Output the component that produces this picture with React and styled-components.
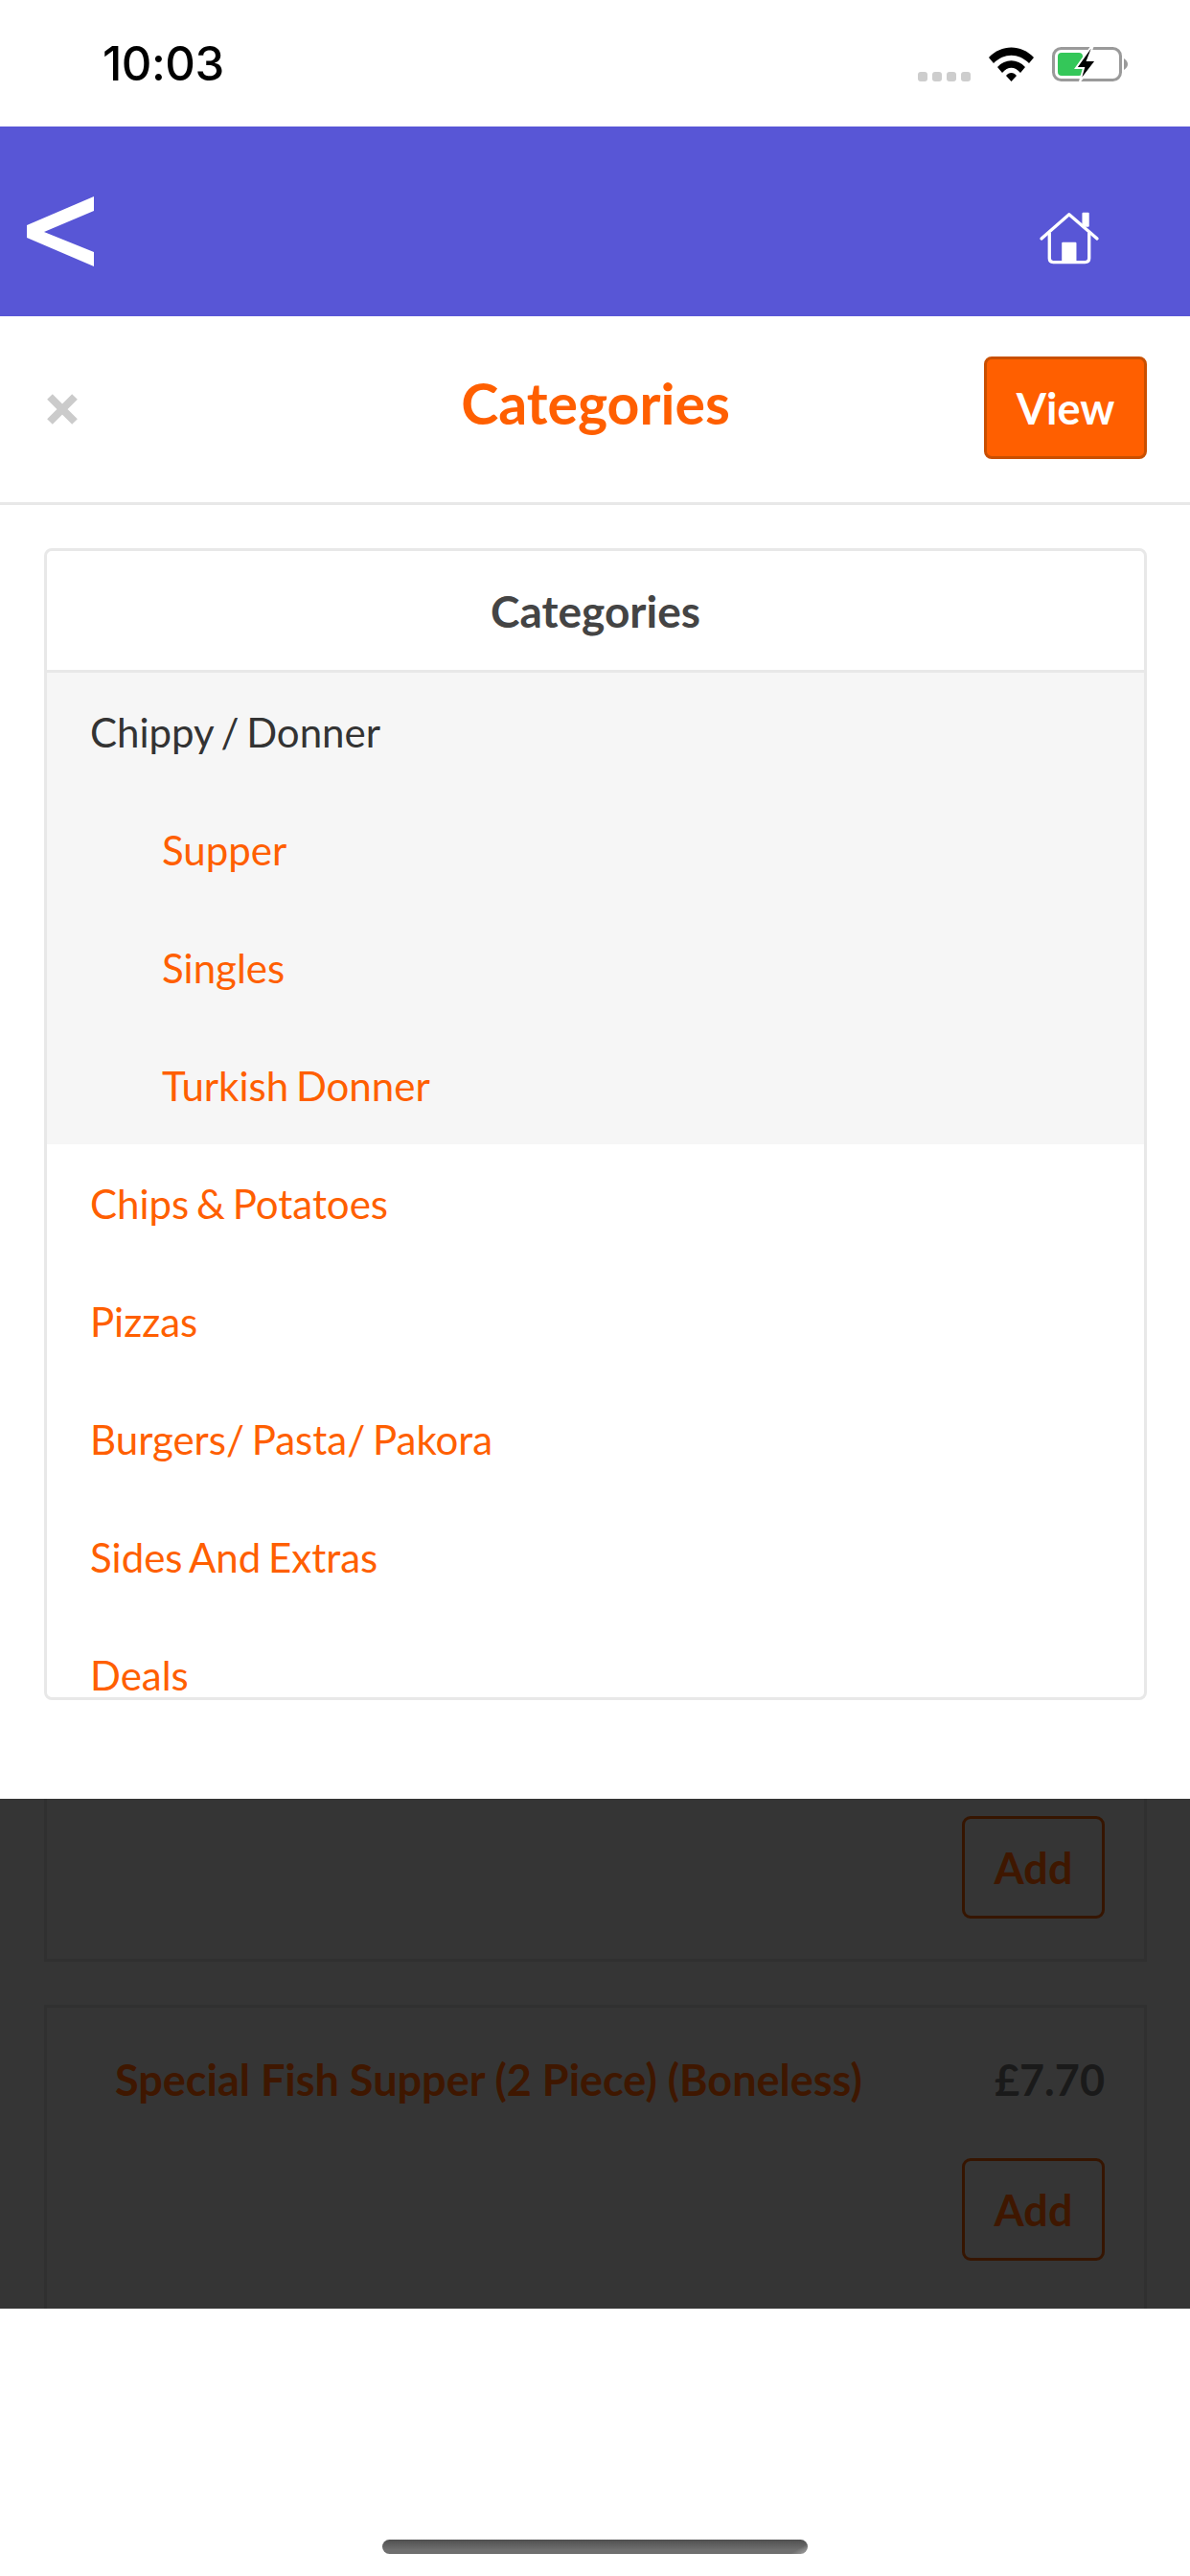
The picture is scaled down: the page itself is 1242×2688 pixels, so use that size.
import React from "react";
import styled, { createGlobalStyle } from "styled-components";

const Global = createGlobalStyle`
  html, body { margin: 0; padding: 0; background: #fff; }
  body { font-family: "Lato", "Open Sans", sans-serif; }
  * { box-sizing: border-box; }
`;

const Screen = styled.div`
  width: 1242px;
  height: 2688px;
  display: flex;
  flex-direction: column;
  overflow: hidden;
  background: #fff;
`;

const StatusBar = styled.div`
  height: 132px;
  padding: 49px 65px 0 107px;
  display: flex;
  justify-content: space-between;
  align-items: flex-start;
`;

const Clock = styled.span`
  font-family: "Inter", "Liberation Sans", sans-serif;
  font-size: 49px;
  font-weight: 500;
  line-height: 36px;
  letter-spacing: -0.5px;
  color: #000;
`;

const StatusIcons = styled.div`
  display: flex;
  align-items: flex-end;
  height: 36px;
`;

const Signal = styled.div`
  display: flex;
  gap: 5px;
  margin-right: 19px;
`;

const SignalDot = styled.i`
  width: 10px;
  height: 10px;
  border-radius: 3px;
  background: #cdcdcd;
`;

const WifiIcon = styled.svg`
  display: block;
  margin-right: 19px;
`;

const NavBar = styled.div`
  height: 198px;
  padding: 73px 92px 0 28px;
  display: flex;
  justify-content: space-between;
  align-items: flex-start;
  background: #5856d6;
`;

const HomeIcon = styled.svg`
  display: block;
  margin-top: 13px;
`;

const Sheet = styled.div`
  height: 1547px;
  background: #fff;
`;

const SheetHeader = styled.div`
  height: 197px;
  padding: 42px 45px 0 46px;
  display: grid;
  grid-template-columns: 1fr auto 1fr;
  align-items: flex-start;
  border-bottom: 3px solid #e8e8e8;
`;

const CloseIcon = styled.svg`
  display: block;
  margin: 39px 0 0 3px;
`;

const SheetTitle = styled.h1`
  margin: -4px 0 0;
  font-size: 59px;
  line-height: 106px;
  font-weight: 700;
  color: #ff5f00;
  height: 106px;
`;

const ViewButton = styled.button`
  justify-self: end;
  width: 170px;
  height: 107px;
  padding: 0;
  border: 3px solid #c94f00;
  border-radius: 8px;
  background: #ff5f00;
  color: #fff;
  font-family: inherit;
  font-size: 45px;
  font-weight: 700;
`;

const Panel = styled.section`
  height: 1202px;
  margin: 45px 45px 0 46px;
  display: flex;
  flex-direction: column;
  border: 3px solid #e8e8e8;
  border-radius: 8px;
  overflow: hidden;
`;

const PanelTitle = styled.div`
  height: 127px;
  flex: none;
  display: flex;
  align-items: center;
  justify-content: center;
  border-bottom: 3px solid #e8e8e8;
  font-size: 46px;
  font-weight: 700;
  color: #444;
`;

const List = styled.div`
  flex: 1;
  min-height: 0;
  overflow: hidden;
`;

const Group = styled.div`
  background: #f6f6f6;
`;

const Row = styled.div`
  height: 123px;
  padding-left: ${(p) => (p.$nested ? 120 : 45)}px;
  display: flex;
  align-items: center;
  font-size: 42px;
  word-spacing: -3px;
  color: ${(p) => (p.$parent ? "#333" : "#ff5f00")};
`;

const Backdrop = styled.div`
  height: 532px;
  padding: 0 45px 0 46px;
  display: flex;
  flex-direction: column;
  gap: 45px;
  overflow: hidden;
  background: #353535;
`;

const MenuCard = styled.div`
  flex: none;
  height: ${(p) => p.$height}px;
  padding: ${(p) => p.$top}px 41px 0 71px;
  border: 3px solid #303030;
  ${(p) => p.$clipped && "border-top: 0;"}
`;

const ItemLine = styled.div`
  display: flex;
  justify-content: space-between;
  align-items: center;
  height: 60px;
  margin-bottom: 52px;
  font-size: 45px;
  font-weight: 700;
`;

const ItemName = styled.span`
  color: #3f1700;
`;

const ItemPrice = styled.span`
  color: #1a1a1a;
`;

const AddRow = styled.div`
  display: flex;
  justify-content: flex-end;
`;

const AddButton = styled.div`
  width: 149px;
  height: 107px;
  display: flex;
  align-items: center;
  justify-content: center;
  border: 3px solid #361500;
  border-radius: 9px;
  color: #3f1700;
  font-size: 45px;
  font-weight: 700;
`;

const Footer = styled.div`
  flex: 1;
  display: flex;
  justify-content: center;
  padding-top: 241px;
  background: #fff;
`;

const HomeIndicator = styled.div`
  width: 444px;
  height: 15px;
  border-radius: 8px;
  background: linear-gradient(150deg, transparent 96%, #a8a8a8 100%),
    linear-gradient(180deg, #4f4f4f 0%, #6f6f6f 70%);
`;

const subItems = ["Supper", "Singles", "Turkish Donner"];
const categories = ["Chips & Potatoes", "Pizzas", "Burgers/ Pasta/ Pakora", "Sides And Extras", "Deals"];

const App = () => (
  <Screen>
    <Global />
    <StatusBar>
      <Clock>10:03</Clock>
      <StatusIcons>
        <Signal>
          {[0, 1, 2, 3].map((i) => (
            <SignalDot key={i} />
          ))}
        </Signal>
        <WifiIcon width="47" height="36" viewBox="0 0 47 36">
          <path d="M0 11 C13 -3 34 -3 47 11 L42 17 C31 6 16 6 5 17 Z" fill="#000" />
          <path d="M9 21 C17 12 30 12 38 21 L33 27 C27 20 20 20 14 27 Z" fill="#000" />
          <path d="M18 30 C21 26 26 26 29 30 L23.5 36 Z" fill="#000" />
        </WifiIcon>
        <svg width="79" height="36" viewBox="0 0 79 36">
          <rect x="1.5" y="1.5" width="70" height="33" rx="8" fill="none" stroke="#9a9a9a" strokeWidth="3" />
          <path d="M75 12 C78 14 79 16 79 18 C79 20 78 22 75 24 Z" fill="#9a9a9a" />
          <rect x="6" y="6" width="26" height="24" rx="4" fill="#34c759" />
          <path d="M40 1 L25 22 L33 22 L29 36 L46 14 L37 14 L42 1 Z" fill="#000" stroke="#fff" strokeWidth="2" />
        </svg>
      </StatusIcons>
    </StatusBar>

    <NavBar>
      <svg width="70" height="73" viewBox="0 0 70 73">
        <path d="M70 0 V15 L18 37 L70 58 V73 L0 43 V30 Z" fill="#fff" />
      </svg>
      <HomeIcon width="68" height="60" viewBox="120 55 205 180">
        <path d="M135 148 L222 72 L310 148" fill="none" stroke="#fff" strokeWidth="10" strokeLinecap="round" strokeLinejoin="round" />
        <path d="M160 130 V210 Q160 222 172 222 H272 Q285 222 285 210 V130" fill="none" stroke="#fff" strokeWidth="10" />
        <rect x="199" y="159" width="46" height="63" rx="3" fill="#fff" />
        <rect x="263" y="66" width="22" height="45" rx="3" fill="#fff" />
      </HomeIcon>
    </NavBar>

    <Sheet>
      <SheetHeader>
        <CloseIcon width="32" height="32" viewBox="0 0 32 32">
          <path d="M3 3 L29 29 M29 3 L3 29" stroke="#cbcbcb" strokeWidth="8" />
        </CloseIcon>
        <SheetTitle>Categories</SheetTitle>
        <ViewButton>View</ViewButton>
      </SheetHeader>
      <Panel>
        <PanelTitle>Categories</PanelTitle>
        <List>
          <Group>
            <Row $parent>Chippy / Donner</Row>
            {subItems.map((name) => (
              <Row key={name} $nested>
                {name}
              </Row>
            ))}
          </Group>
          {categories.map((name) => (
            <Row key={name}>{name}</Row>
          ))}
        </List>
      </Panel>
    </Sheet>

    <Backdrop>
      <MenuCard $clipped $height={170} $top={18}>
        <AddRow>
          <AddButton>Add</AddButton>
        </AddRow>
      </MenuCard>
      <MenuCard $height={340} $top={45}>
        <ItemLine>
          <ItemName>Special Fish Supper (2 Piece) (Boneless)</ItemName>
          <ItemPrice>£7.70</ItemPrice>
        </ItemLine>
        <AddRow>
          <AddButton>Add</AddButton>
        </AddRow>
      </MenuCard>
    </Backdrop>

    <Footer>
      <HomeIndicator />
    </Footer>
  </Screen>
);

export default App;
